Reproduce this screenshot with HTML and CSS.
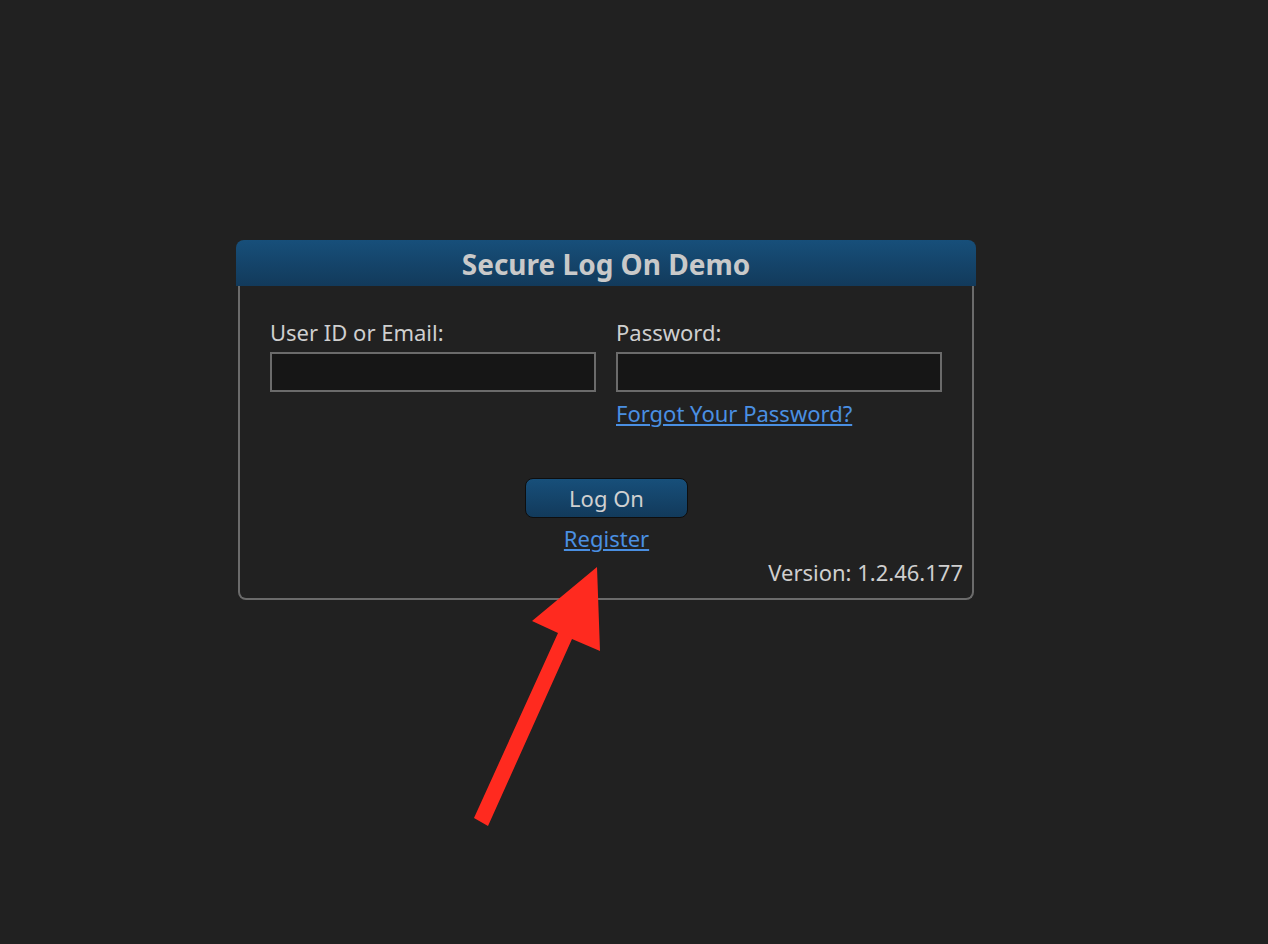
FILE: index.html
```html
<!DOCTYPE html>
<html>
<head>
<meta charset="utf-8">
<link rel="stylesheet" href="styles.css">
</head>
<body>
<div class="page">
  <div class="card">
    <div class="card-header">Secure Log On Demo</div>
    <div class="card-body">
      <div class="fields">
        <div class="field">
          <label class="label">User ID or Email:</label>
          <input class="input" type="text">
        </div>
        <div class="field">
          <label class="label">Password:</label>
          <input class="input" type="password">
          <a class="link forgot" href="#">Forgot Your Password?</a>
        </div>
      </div>
      <div class="actions">
        <button class="btn">Log On</button>
        <a class="link register" href="#">Register</a>
      </div>
      <div class="version">Version: 1.2.46.177</div>
    </div>
  </div>
</div>
<svg class="annotation" width="1268" height="944" viewBox="0 0 1268 944">
  <polygon fill="#ff2a1f" points="597,567 600,651 572,639 488,826 474,818 558,633 532,621"/>
</svg>
</body>
</html>
```

FILE: styles.css
```css
html, body {
  margin: 0;
  padding: 0;
  background: #212121;
  font-family: "Noto Sans", "Open Sans", sans-serif;
  color: #cfcfcf;
}
.page {
  padding: 240px 0 0 236px;
  width: 1032px;
  height: 704px;
}
.card {
  width: 740px;
}
.card-header {
  height: 46px;
  box-sizing: border-box;
  border-radius: 8px 8px 0 0;
  background: linear-gradient(#174f7a, #123a5b);
  color: #c9c9c9;
  font-weight: bold;
  font-size: 28px;
  line-height: 48px;
  text-align: center;
}
.card-body {
  margin: 0 2px;
  height: 314px;
  box-sizing: border-box;
  border: 2px solid #6b6b6b;
  border-top: none;
  border-radius: 0 0 8px 8px;
  padding: 31px 30px 0;
  display: flex;
  flex-direction: column;
}
.fields {
  display: grid;
  grid-template-columns: 1fr 1fr;
  column-gap: 20px;
  height: 161px;
}
.field {
  display: flex;
  flex-direction: column;
  align-items: flex-start;
}
.label {
  font-size: 22px;
  line-height: 30px;
  margin-bottom: 5px;
}
.input {
  width: 100%;
  height: 40px;
  box-sizing: border-box;
  border: 2px solid #6b6b6b;
  background: #161616;
  margin: 0;
  outline: none;
}
.link {
  color: #4a8fe2;
  text-decoration: underline;
  font-size: 22px;
  line-height: 30px;
}
.forgot {
  margin-top: 6px;
}
.actions {
  display: flex;
  flex-direction: column;
  align-items: center;
  padding-left: 1px;
}
.btn {
  width: 163px;
  height: 40px;
  border: 1px solid #0e0e0e;
  border-radius: 8px;
  background: linear-gradient(#174f7a, #123a5b);
  color: #d0d0d0;
  font-family: inherit;
  font-size: 22px;
  padding: 0;
}
.register {
  margin-top: 5px;
}
.version {
  text-align: right;
  font-size: 22px;
  line-height: 30px;
  margin-right: -21px;
  margin-top: 4px;
}
.annotation {
  position: absolute;
  left: 0;
  top: 0;
  pointer-events: none;
}
```
